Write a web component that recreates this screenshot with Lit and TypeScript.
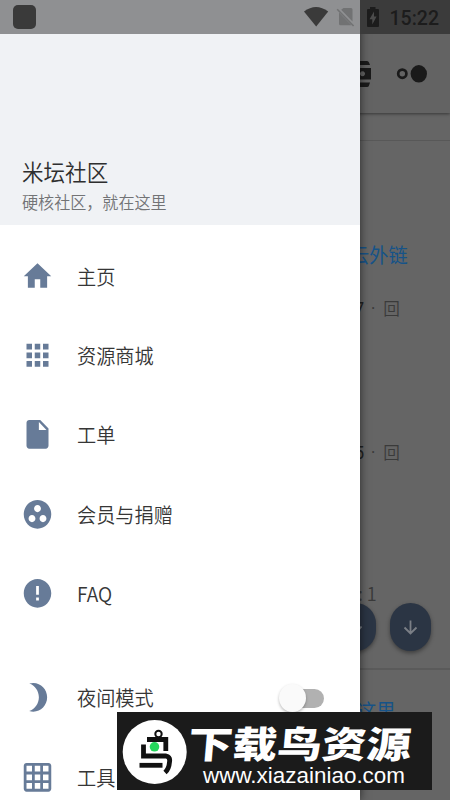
import { LitElement, html, css, svg } from "lit";
import { customElement, property } from "lit/decorators.js";

const ICONS: Record<string, string> = {
  home: "M10 20v-6h4v6h5v-8h3L12 3 2 12h3v8z",
  apps: "M4 8h4V4H4v4zm6 12h4v-4h-4v4zm-6 0h4v-4H4v4zm0-6h4v-4H4v4zm6 0h4v-4h-4v4zm6-10v4h4V4h-4zm-6 4h4V4h-4v4zm6 6h4v-4h-4v4zm0 6h4v-4h-4v4z",
  file: "M6 2c-1.1 0-1.99.9-1.99 2L4 20c0 1.1.89 2 1.99 2H18c1.1 0 2-.9 2-2V8l-6-6H6zm7 7V3.5L18.5 9H13z",
  group: "M12 2C6.48 2 2 6.48 2 12s4.48 10 10 10 10-4.48 10-10S17.52 2 12 2zM8 17.5c-1.38 0-2.5-1.12-2.5-2.5s1.12-2.5 2.5-2.5 2.5 1.12 2.5 2.5-1.12 2.5-2.5 2.5zM9.5 8c0-1.38 1.12-2.5 2.5-2.5s2.5 1.12 2.5 2.5-1.12 2.5-2.5 2.5S9.5 9.38 9.5 8zm6.5 9.5c-1.38 0-2.5-1.12-2.5-2.5s1.12-2.5 2.5-2.5 2.5 1.12 2.5 2.5-1.12 2.5-2.5 2.5z",
  error: "M12 2C6.48 2 2 6.48 2 12s4.48 10 10 10 10-4.48 10-10S17.52 2 12 2zm1 15h-2v-2h2v2zm0-4h-2V7h2v6z",
  moon: "M9 2c-1.05 0-2.05.16-3 .46 4.06 1.27 7 5.06 7 9.54 0 4.48-2.94 8.27-7 9.54.95.3 1.95.46 3 .46 5.52 0 10-4.48 10-10S14.52 2 9 2z",
  grid: "M20 2H4c-1.1 0-2 .9-2 2v16c0 1.1.9 2 2 2h16c1.1 0 2-.9 2-2V4c0-1.1-.9-2-2-2zM8 20H4v-4h4v4zm0-6H4v-4h4v4zm0-6H4V4h4v4zm6 12h-4v-4h4v4zm0-6h-4v-4h4v4zm0-6h-4V4h4v4zm6 12h-4v-4h4v4zm0-6h-4v-4h4v4zm0-6h-4V4h4v4z",
};

@customElement("menu-item")
class MenuItem extends LitElement {
  @property() icon = "";
  @property() label = "";
  @property({ type: Boolean }) toggle = false;

  static styles = css`
    :host {
      display: flex;
      align-items: center;
      height: 79.3px;
      padding: 0 36.5px 0 21.4px;
      box-sizing: border-box;
      flex: none;
    }
    .icon { width: 33px; height: 34.6px; fill: #677b98; flex: none; }
    .label {
      margin-left: 22.3px;
      padding-bottom: 0.6px;
      font-size: 20.3px;
      line-height: 30px;
      color: #363636;
      transform: scaleX(0.945);
      transform-origin: left;
      white-space: nowrap;
      flex: 1;
    }
    .switch { display: flex; align-items: center; flex: none; }
    .knob {
      width: 27px;
      height: 28px;
      border-radius: 50%;
      background: #fafafa;
      box-shadow: 0 1.5px 3px rgba(0, 0, 0, 0.28);
      z-index: 1;
    }
    .track { width: 32px; height: 19px; margin: 2px 0 0 -14px; border-radius: 10px; background: #b1b1b1; }
  `;

  render() {
    return html`
      <svg class="icon" viewBox="0 0 24 24" preserveAspectRatio="none"><path d=${ICONS[this.icon]}></path></svg>
      <span class="label">${this.label}</span>
      ${this.toggle ? html`<span class="switch"><span class="knob"></span><span class="track"></span></span>` : ""}
    `;
  }
}

@customElement("status-bar")
class StatusBar extends LitElement {
  static styles = css`
    :host {
      display: flex;
      align-items: center;
      height: 34px;
      background: linear-gradient(to right, #8f9092 360px, #3b3b3b 360px);
    }
    .app { width: 23px; height: 24px; margin-left: 13px; border-radius: 5px; background: #3a3a3a; }
    .icons { width: 80px; height: 34px; margin-left: auto; }
    .time {
      width: 68px;
      box-sizing: border-box;
      padding: 3px 0 0 7.5px;
      font: 500 19.5px/34px Roboto, sans-serif;
      color: #1c1c1c;
      white-space: nowrap;
    }
  `;

  render() {
    return html`
      <span class="app"></span>
      <svg class="icons" viewBox="302 0 80 34">
        <path fill="#3a3a3a" d="M304 11.5Q316 2.5 328.2 11.5L316.2 26.5Z"></path>
        <path fill="#717273" d="M343.5 8H351q1.500 0 1.500 1.500V21.500L341.200 9.800ZM339 12.500 351.500 25.200H340.500q-1.500 0-1.500-1.500Z"></path>
        <path stroke="#717273" stroke-width="1.6" d="M337.2 9.2 353.6 26"></path>
        <path fill="#1c1c1c" d="M370 7h5.5v2H378q1 0 1 1V26q0 1-1 1H368q-1 0-1-1V10q0-1 1-1H370Z"></path>
        <path fill="#4b4b4b" d="M374 11.5 369.5 19.2H372.3V24.5L376.6 16.6H374Z"></path>
      </svg>
      <span class="time">15:22</span>
    `;
  }
}

@customElement("forum-page")
class ForumPage extends LitElement {
  static styles = css`
    :host {
      display: flex;
      flex-direction: column;
      background: #656565;
      overflow: hidden;
      padding-top: 34px;
      box-sizing: border-box;
    }
    .bar {
      height: 79px;
      flex: none;
      display: flex;
      justify-content: flex-end;
      background: #636363;
      box-shadow: 0 1px 3px rgba(0, 0, 0, 0.45);
    }
    .actions { width: 100px; height: 79px; }
    .tabs { height: 27px; flex: none; border-bottom: 1px solid #585858; }
    .post { display: flex; flex-direction: column; align-items: flex-end; flex: none; box-sizing: border-box; }
    .first { height: 529px; padding-top: 97px; border-bottom: 2px solid #5a5a5a; }
    .second { padding-top: 24px; }
    .link, .meta, .count { white-space: nowrap; transform: scaleX(0.95); transform-origin: right; }
    .link { font-size: 20.3px; line-height: 32px; color: #165388; font-weight: 400; margin-right: 42px; }
    .second .link { margin-right: 54px; }
    .meta { font-size: 17.5px; line-height: 26px; color: #3a3a3a; margin: 25px 50.500px 0 0; }
    .meta b { font: 400 18px/20px Roboto, sans-serif; color: #222; }
    .meta i { font: 400 17.5px/20px Roboto, sans-serif; padding: 0 4px 0 3px; }
    .next { margin-top: 118px; }
    .count { font-size: 19px; line-height: 26px; color: #3a3a3a; margin: 115px 73.5px 0 0; }
    .fabs { display: flex; gap: 13.5px; margin: -3px 19.5px 0 0; }
    .fab {
      width: 41px;
      height: 48px;
      border-radius: 20.5px;
      background: #2b3544;
      box-shadow: 0 2px 4px rgba(0, 0, 0, 0.4);
    }
    .fab path { fill: none; stroke: #7b7f86; stroke-width: 1.8; }
  `;

  render() {
    const arrow = (d: string) => html`<svg class="fab" viewBox="0 0 41 48">${svg`<path d=${d}></path>`}</svg>`;
    return html`
      <div class="bar">
        <svg class="actions" viewBox="350 34 100 79">
          <path fill="#1a1a1a" fill-rule="evenodd"
            d="M353 65V63q0-2 2-2H367q1.5 0 2 1.5L370 65ZM353 68H371V79.5H353ZM362.5 71.3a2.5 2.5 0 1 0 .01 0ZM353 82.5H370L369 85.5Q368.600 87 367 87H355q-2 0-2-2Z"></path>
          <circle cx="402.3" cy="73.7" r="4.1" fill="none" stroke="#1a1a1a" stroke-width="2.7"></circle>
          <ellipse cx="418.8" cy="73.8" rx="8.200" ry="8.700" fill="#1a1a1a"></ellipse>
        </svg>
      </div>
      <div class="tabs"></div>
      <div class="post first">
        <span class="link">云外链</span>
        <span class="meta"><b>7</b><i> · </i>回</span>
        <span class="meta next"><b>5</b><i> · </i>回</span>
        <span class="count">: 1</span>
        <div class="fabs">
          ${arrow("M20.5 30.500V17.500M26.500 23.500 20.500 30.500 14.500 23.500")}
          ${arrow("M20.5 17.5V30.500M14.500 24.500 20.500 30.500 26.500 24.500")}
        </div>
      </div>
      <div class="post second"><span class="link">这里</span></div>
    `;
  }
}

@customElement("site-badge")
class SiteBadge extends LitElement {
  static styles = css`
    :host { display: block; width: 315px; height: 78px; background: #1b1b1b; }
    svg { display: block; }
    .name { font: 900 42px "Noto Sans CJK SC", sans-serif; fill: #fff; }
    .url { font: 22.5px "Liberation Sans", sans-serif; fill: #fff; }
  `;

  render() {
    return html`
      <svg width="315" height="78" viewBox="117 712 315 78">
        <circle cx="154.700" cy="752" r="32" fill="#fff"></circle>
        <g fill="none" stroke="#111" stroke-width="4.800">
          <circle cx="158.500" cy="734" r="3.200" stroke-width="2"></circle>
          <path d="M147 739.500H165.800V751"></path>
          <path d="M143.500 744.500V756H166Q170.500 757 169.500 762Q169 769 165 772.500"></path>
          <path d="M139.500 765.300H162.500"></path>
        </g>
        <circle cx="154.500" cy="746.800" r="4.800" fill="#25d75c"></circle>
        <text class="name" transform="translate(187 758) skewX(-5) scale(1 .88)" textLength="223" lengthAdjust="spacingAndGlyphs">下载鸟资源</text>
        <text class="url" x="203" y="783" textLength="202" lengthAdjust="spacingAndGlyphs">www.xiazainiao.com</text>
      </svg>
    `;
  }
}

@customElement("app-root")
class AppRoot extends LitElement {
  static styles = css`
    :host {
      display: grid;
      grid-template: 800px / 450px;
      position: relative;
      overflow: hidden;
      font-family: "Noto Sans CJK SC", sans-serif;
      font-weight: 350;
    }
    forum-page, .drawer, status-bar { grid-area: 1 / 1; }
    status-bar { z-index: 2; align-self: start; }
    .drawer {
      width: 360px;
      display: flex;
      flex-direction: column;
      overflow: hidden;
      background: #fff;
      box-shadow: 0 0 9px rgba(0, 0, 0, 0.6);
      z-index: 1;
    }
    .head {
      height: 225px;
      flex: none;
      box-sizing: border-box;
      padding: 0 22px 10px;
      display: flex;
      flex-direction: column;
      justify-content: flex-end;
      background: #f0f2f5;
    }
    .title, .sub { transform: scaleX(0.945); transform-origin: left; white-space: nowrap; }
    .title { font-size: 22.8px; line-height: 34px; color: #2e2e2e; }
    .sub { font-size: 17px; line-height: 26px; color: #727375; }
    .menu { padding-top: 11.5px; }
    .more { padding-top: 25px; }
    site-badge { position: absolute; left: 117px; top: 712px; z-index: 3; }
  `;

  render() {
    return html`
      <forum-page></forum-page>
      <nav class="drawer">
        <header class="head">
          <span class="title">米坛社区</span>
          <span class="sub">硬核社区，就在这里</span>
        </header>
        <div class="menu">
          <menu-item icon="home" label="主页"></menu-item>
          <menu-item icon="apps" label="资源商城"></menu-item>
          <menu-item icon="file" label="工单"></menu-item>
          <menu-item icon="group" label="会员与捐赠"></menu-item>
          <menu-item icon="error" label="FAQ"></menu-item>
        </div>
        <div class="more">
          <menu-item icon="moon" label="夜间模式" toggle></menu-item>
          <menu-item icon="grid" label="工具"></menu-item>
        </div>
      </nav>
      <status-bar></status-bar>
      <site-badge></site-badge>
    `;
  }
}
